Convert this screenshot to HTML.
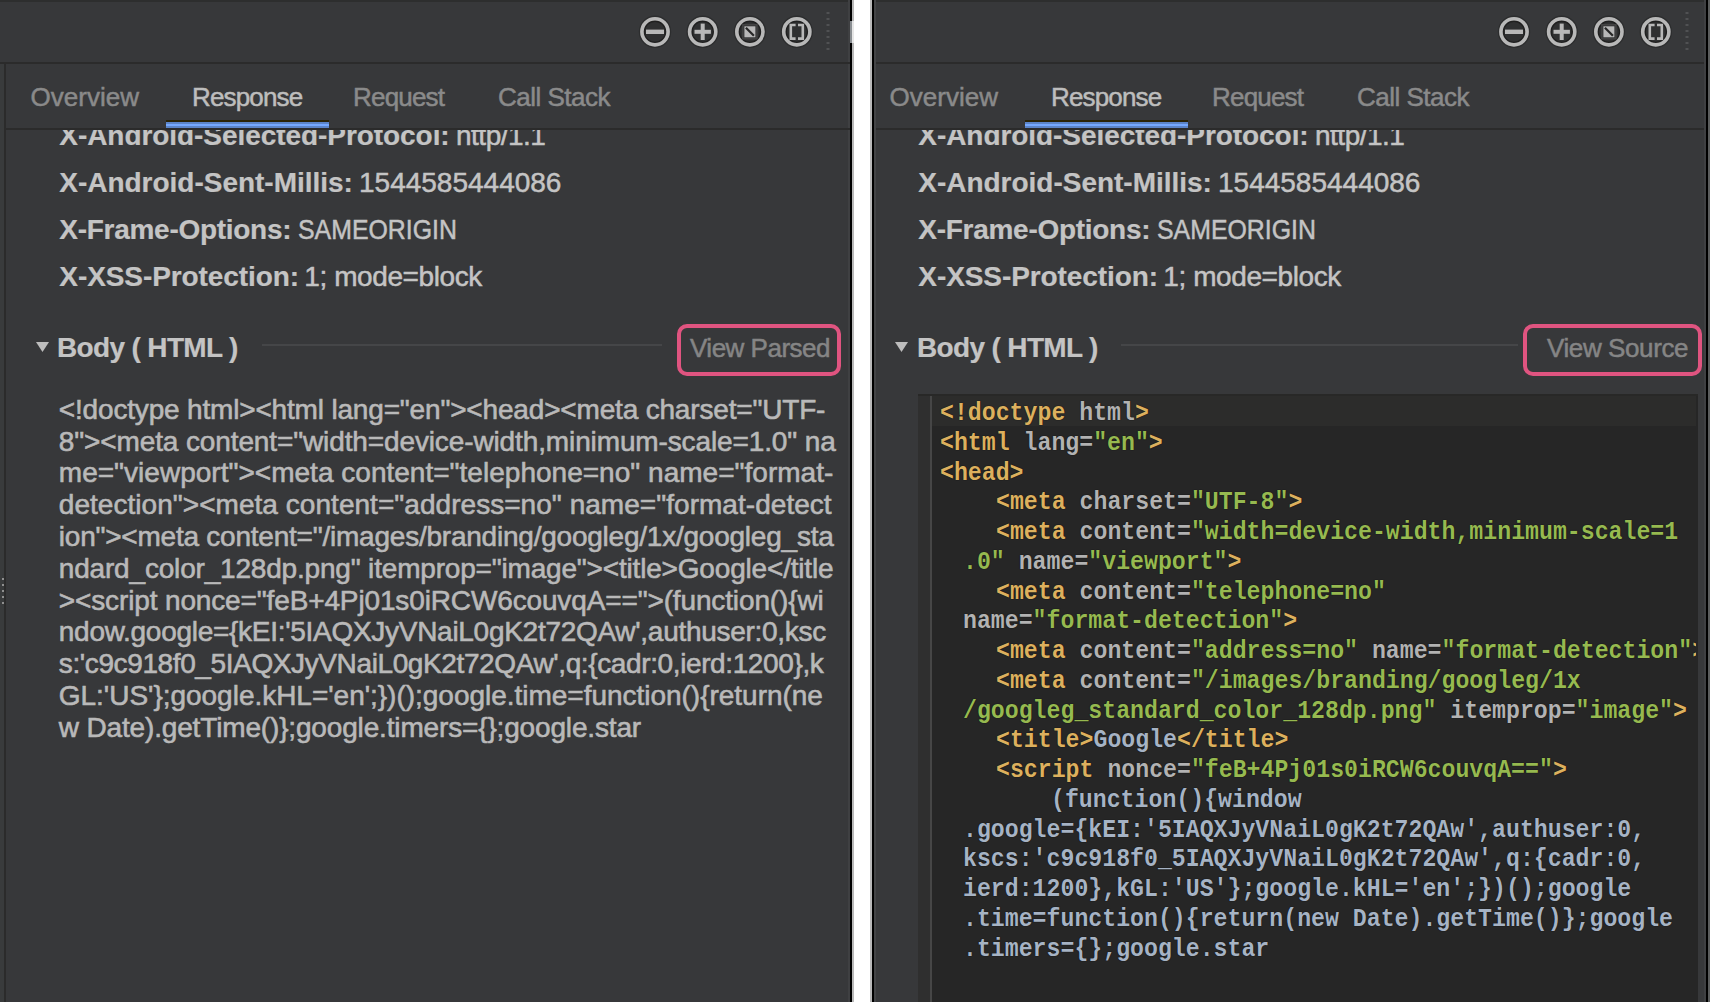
<!DOCTYPE html><html><head><meta charset="utf-8"><style>html,body{margin:0;padding:0;}body{width:1712px;height:1002px;overflow:hidden;position:relative;background:#37383a;font-family:'Liberation Sans', sans-serif;}div{box-sizing:border-box}</style></head><body>
<div style="position:absolute;left:0px;top:0px;width:1712px;height:2px;background:#2d2e2e;"></div>
<div style="position:absolute;left:848px;top:0px;width:2px;height:1002px;background:#3f4042;"></div>
<div style="position:absolute;left:0px;top:62px;width:850px;height:2px;background:#2b2b2b;"></div>
<div style="position:absolute;left:874px;top:62px;width:832px;height:2px;background:#2b2b2b;"></div>
<div style="position:absolute;left:0px;top:128px;width:850px;height:2px;background:#2b2b2b;"></div>
<div style="position:absolute;left:874px;top:128px;width:832px;height:2px;background:#2b2b2b;"></div>
<div style="position:absolute;left:0px;top:64px;width:4px;height:938px;background:#393b3c;"></div>
<div style="position:absolute;left:4px;top:64px;width:2px;height:938px;background:#2b2b2b;"></div>
<div style="position:absolute;left:2px;top:578px;width:2px;height:2px;background:#8f8f8f;"></div>
<div style="position:absolute;left:2px;top:584px;width:2px;height:2px;background:#8f8f8f;"></div>
<div style="position:absolute;left:2px;top:590px;width:2px;height:2px;background:#8f8f8f;"></div>
<div style="position:absolute;left:2px;top:596px;width:2px;height:2px;background:#8f8f8f;"></div>
<div style="position:absolute;left:2px;top:602px;width:2px;height:2px;background:#8f8f8f;"></div>
<div style="position:absolute;left:850px;top:0px;width:2px;height:1002px;background:#000;"></div>
<div style="position:absolute;left:850px;top:21px;width:2px;height:22px;background:#8a8e92;"></div>
<div style="position:absolute;left:852px;top:0px;width:2px;height:1002px;background:#b9b9b9;"></div>
<div style="position:absolute;left:852px;top:21px;width:2px;height:22px;background:#e6e6e6;"></div>
<div style="position:absolute;left:854px;top:0px;width:16px;height:1002px;background:#ffffff;"></div>
<div style="position:absolute;left:870px;top:0px;width:2px;height:1002px;background:#b9b9b9;"></div>
<div style="position:absolute;left:872px;top:0px;width:2px;height:1002px;background:#000;"></div>
<div style="position:absolute;left:874px;top:0px;width:2px;height:1002px;background:#434446;"></div>
<div style="position:absolute;left:1704px;top:0px;width:2px;height:1002px;background:#3f4042;"></div>
<div style="position:absolute;left:1706px;top:0px;width:2px;height:1002px;background:#000;"></div>
<div style="position:absolute;left:1708px;top:0px;width:2px;height:1002px;background:#5a5c5c;"></div>
<div style="position:absolute;left:1710px;top:0px;width:2px;height:1002px;background:#ffffff;"></div>
<svg style="position:absolute;left:0;top:0" width="1712" height="70"><circle cx="655" cy="31.8" r="15.4" fill="none" stroke="#2c2d2e" stroke-width="1.6"/><circle cx="655" cy="31.8" r="11.2" fill="#2f3031"/><circle cx="655" cy="31.8" r="10.6" fill="none" stroke="#202020" stroke-width="1.4"/><circle cx="655" cy="31.8" r="13.1" fill="none" stroke="#b8b8b8" stroke-width="3.6"/><rect x="646" y="29.6" width="18" height="4.4" fill="#b8b8b8"/><circle cx="702.7" cy="31.8" r="15.4" fill="none" stroke="#2c2d2e" stroke-width="1.6"/><circle cx="702.7" cy="31.8" r="11.2" fill="#2f3031"/><circle cx="702.7" cy="31.8" r="10.6" fill="none" stroke="#202020" stroke-width="1.4"/><circle cx="702.7" cy="31.8" r="13.1" fill="none" stroke="#b8b8b8" stroke-width="3.6"/><rect x="694.5" y="29.8" width="16.4" height="4" fill="#b8b8b8"/><rect x="700.7" y="23.6" width="4" height="16.4" fill="#b8b8b8"/><circle cx="749.9" cy="31.8" r="15.4" fill="none" stroke="#2c2d2e" stroke-width="1.6"/><circle cx="749.9" cy="31.8" r="11.2" fill="#2f3031"/><circle cx="749.9" cy="31.8" r="10.6" fill="none" stroke="#202020" stroke-width="1.4"/><circle cx="749.9" cy="31.8" r="13.1" fill="none" stroke="#b8b8b8" stroke-width="3.6"/><rect x="742.9" y="24.8" width="14" height="14" fill="none" stroke="#444" stroke-width="1.5"/><rect x="744.4" y="26.3" width="11" height="11" fill="#b8b8b8"/><line x1="745.9" y1="27.8" x2="753.9" y2="35.8" stroke="#262626" stroke-width="2.2"/><circle cx="796.8" cy="31.8" r="15.4" fill="none" stroke="#2c2d2e" stroke-width="1.6"/><circle cx="796.8" cy="31.8" r="11.2" fill="#2f3031"/><circle cx="796.8" cy="31.8" r="10.6" fill="none" stroke="#202020" stroke-width="1.4"/><circle cx="796.8" cy="31.8" r="13.1" fill="none" stroke="#b8b8b8" stroke-width="3.6"/><path d="M795.5999999999999 25.0 h-4.8 v13.6 h4.8" fill="none" stroke="#b8b8b8" stroke-width="2.6"/><path d="M798.0 25.0 h4.8 v13.6 h-4.8" fill="none" stroke="#b8b8b8" stroke-width="2.6"/><rect x="826.5" y="12" width="3" height="2" fill="#505153"/><rect x="826.5" y="18" width="3" height="2" fill="#505153"/><rect x="826.5" y="24" width="3" height="2" fill="#505153"/><rect x="826.5" y="30" width="3" height="2" fill="#505153"/><rect x="826.5" y="36" width="3" height="2" fill="#505153"/><rect x="826.5" y="42" width="3" height="2" fill="#505153"/><rect x="826.5" y="48" width="3" height="2" fill="#505153"/></svg>
<div style="position:absolute;left:30.6px;top:79.79px;height:34px;line-height:34px;font-size:26px;font-weight:normal;color:#8a8a8a;letter-spacing:0px;white-space:pre;font-family:'Liberation Sans', sans-serif;-webkit-text-stroke:0.5px currentColor">Overview</div>
<div style="position:absolute;left:192px;top:79.79px;height:34px;line-height:34px;font-size:26px;font-weight:normal;color:#bdbdbd;letter-spacing:-0.85px;white-space:pre;font-family:'Liberation Sans', sans-serif;-webkit-text-stroke:0.5px currentColor">Response</div>
<div style="position:absolute;left:353px;top:79.79px;height:34px;line-height:34px;font-size:26px;font-weight:normal;color:#8a8a8a;letter-spacing:-0.8px;white-space:pre;font-family:'Liberation Sans', sans-serif;-webkit-text-stroke:0.5px currentColor">Request</div>
<div style="position:absolute;left:498px;top:79.79px;height:34px;line-height:34px;font-size:26px;font-weight:normal;color:#8a8a8a;letter-spacing:-0.5px;white-space:pre;font-family:'Liberation Sans', sans-serif;-webkit-text-stroke:0.5px currentColor">Call Stack</div>
<div style="position:absolute;left:166px;top:120px;width:163px;height:2px;background:#2a2308;"></div>
<div style="position:absolute;left:166px;top:122px;width:163px;height:6px;background:#6a9cf0;background:linear-gradient(#5b84c8 0,#5b84c8 2px,#75a8ff 2px,#75a8ff 4px,#5b84c8 4px)"></div>
<div style="position:absolute;left:0px;top:130px;width:850px;height:200px;overflow:hidden">
<div style="position:absolute;left:59.3px;top:-12.31px;height:36px;line-height:36px;font-size:28px;font-weight:bold;letter-spacing:-0.06px;color:#c4c4c4;white-space:pre;font-family:'Liberation Sans', sans-serif;-webkit-text-stroke:0.2px #c4c4c4">X-Android-Selected-Protocol:</div>
<div style="position:absolute;left:456.0px;top:-12.31px;height:36px;line-height:36px;font-size:28px;letter-spacing:-0.5px;color:#c4c4c4;white-space:pre;font-family:'Liberation Sans', sans-serif;-webkit-text-stroke:0.5px #c4c4c4;">http/1.1</div>
<div style="position:absolute;left:59.3px;top:34.89px;height:36px;line-height:36px;font-size:28px;font-weight:bold;letter-spacing:-0.02px;color:#c4c4c4;white-space:pre;font-family:'Liberation Sans', sans-serif;-webkit-text-stroke:0.2px #c4c4c4">X-Android-Sent-Millis:</div>
<div style="position:absolute;left:359.0px;top:34.89px;height:36px;line-height:36px;font-size:28px;letter-spacing:0.0px;color:#c4c4c4;white-space:pre;font-family:'Liberation Sans', sans-serif;-webkit-text-stroke:0.5px #c4c4c4;">1544585444086</div>
<div style="position:absolute;left:59.3px;top:82.09px;height:36px;line-height:36px;font-size:28px;font-weight:bold;letter-spacing:-0.28px;color:#c4c4c4;white-space:pre;font-family:'Liberation Sans', sans-serif;-webkit-text-stroke:0.2px #c4c4c4">X-Frame-Options:</div>
<div style="position:absolute;left:298.0px;top:82.09px;height:36px;line-height:36px;font-size:28px;letter-spacing:0px;color:#c4c4c4;white-space:pre;font-family:'Liberation Sans', sans-serif;-webkit-text-stroke:0.5px #c4c4c4;transform:scaleX(0.888);transform-origin:0 0;">SAMEORIGIN</div>
<div style="position:absolute;left:59.3px;top:129.29px;height:36px;line-height:36px;font-size:28px;font-weight:bold;letter-spacing:-0.08px;color:#c4c4c4;white-space:pre;font-family:'Liberation Sans', sans-serif;-webkit-text-stroke:0.2px #c4c4c4">X-XSS-Protection:</div>
<div style="position:absolute;left:304.3px;top:129.29px;height:36px;line-height:36px;font-size:28px;letter-spacing:-0.41px;color:#c4c4c4;white-space:pre;font-family:'Liberation Sans', sans-serif;-webkit-text-stroke:0.5px #c4c4c4;">1; mode=block</div>
</div>
<svg style="position:absolute;left:0px;top:330px" width="60" height="40"><path d="M36 12 L49 12 L42.5 22 Z" fill="#bdbdbd"/></svg>
<div style="position:absolute;left:57px;top:329.69px;height:36px;line-height:36px;font-size:28px;font-weight:bold;color:#c4c4c4;letter-spacing:-0.65px;white-space:pre;font-family:'Liberation Sans', sans-serif;-webkit-text-stroke:0.2px #c4c4c4">Body ( HTML )</div>
<div style="position:absolute;left:262px;top:344px;width:400px;height:2px;background:#454648;"></div>
<div style="position:absolute;left:677px;top:324px;width:164px;height:52px;border:4px solid #e05480;border-radius:10px"></div>
<div style="position:absolute;left:690px;top:331.19px;height:34px;line-height:34px;font-size:26px;font-weight:normal;color:#858585;letter-spacing:-0.5px;white-space:pre;font-family:'Liberation Sans', sans-serif;-webkit-text-stroke:0.5px currentColor">View Parsed</div>
<svg style="position:absolute;left:0;top:0" width="1712" height="70"><circle cx="1514" cy="31.8" r="15.4" fill="none" stroke="#2c2d2e" stroke-width="1.6"/><circle cx="1514" cy="31.8" r="11.2" fill="#2f3031"/><circle cx="1514" cy="31.8" r="10.6" fill="none" stroke="#202020" stroke-width="1.4"/><circle cx="1514" cy="31.8" r="13.1" fill="none" stroke="#b8b8b8" stroke-width="3.6"/><rect x="1505" y="29.6" width="18" height="4.4" fill="#b8b8b8"/><circle cx="1561.7" cy="31.8" r="15.4" fill="none" stroke="#2c2d2e" stroke-width="1.6"/><circle cx="1561.7" cy="31.8" r="11.2" fill="#2f3031"/><circle cx="1561.7" cy="31.8" r="10.6" fill="none" stroke="#202020" stroke-width="1.4"/><circle cx="1561.7" cy="31.8" r="13.1" fill="none" stroke="#b8b8b8" stroke-width="3.6"/><rect x="1553.5" y="29.8" width="16.4" height="4" fill="#b8b8b8"/><rect x="1559.7" y="23.6" width="4" height="16.4" fill="#b8b8b8"/><circle cx="1608.9" cy="31.8" r="15.4" fill="none" stroke="#2c2d2e" stroke-width="1.6"/><circle cx="1608.9" cy="31.8" r="11.2" fill="#2f3031"/><circle cx="1608.9" cy="31.8" r="10.6" fill="none" stroke="#202020" stroke-width="1.4"/><circle cx="1608.9" cy="31.8" r="13.1" fill="none" stroke="#b8b8b8" stroke-width="3.6"/><rect x="1601.9" y="24.8" width="14" height="14" fill="none" stroke="#444" stroke-width="1.5"/><rect x="1603.4" y="26.3" width="11" height="11" fill="#b8b8b8"/><line x1="1604.9" y1="27.8" x2="1612.9" y2="35.8" stroke="#262626" stroke-width="2.2"/><circle cx="1655.8" cy="31.8" r="15.4" fill="none" stroke="#2c2d2e" stroke-width="1.6"/><circle cx="1655.8" cy="31.8" r="11.2" fill="#2f3031"/><circle cx="1655.8" cy="31.8" r="10.6" fill="none" stroke="#202020" stroke-width="1.4"/><circle cx="1655.8" cy="31.8" r="13.1" fill="none" stroke="#b8b8b8" stroke-width="3.6"/><path d="M1654.6 25.0 h-4.8 v13.6 h4.8" fill="none" stroke="#b8b8b8" stroke-width="2.6"/><path d="M1657.0 25.0 h4.8 v13.6 h-4.8" fill="none" stroke="#b8b8b8" stroke-width="2.6"/><rect x="1685.5" y="12" width="3" height="2" fill="#505153"/><rect x="1685.5" y="18" width="3" height="2" fill="#505153"/><rect x="1685.5" y="24" width="3" height="2" fill="#505153"/><rect x="1685.5" y="30" width="3" height="2" fill="#505153"/><rect x="1685.5" y="36" width="3" height="2" fill="#505153"/><rect x="1685.5" y="42" width="3" height="2" fill="#505153"/><rect x="1685.5" y="48" width="3" height="2" fill="#505153"/></svg>
<div style="position:absolute;left:889.6px;top:79.79px;height:34px;line-height:34px;font-size:26px;font-weight:normal;color:#8a8a8a;letter-spacing:0px;white-space:pre;font-family:'Liberation Sans', sans-serif;-webkit-text-stroke:0.5px currentColor">Overview</div>
<div style="position:absolute;left:1051px;top:79.79px;height:34px;line-height:34px;font-size:26px;font-weight:normal;color:#bdbdbd;letter-spacing:-0.85px;white-space:pre;font-family:'Liberation Sans', sans-serif;-webkit-text-stroke:0.5px currentColor">Response</div>
<div style="position:absolute;left:1212px;top:79.79px;height:34px;line-height:34px;font-size:26px;font-weight:normal;color:#8a8a8a;letter-spacing:-0.8px;white-space:pre;font-family:'Liberation Sans', sans-serif;-webkit-text-stroke:0.5px currentColor">Request</div>
<div style="position:absolute;left:1357px;top:79.79px;height:34px;line-height:34px;font-size:26px;font-weight:normal;color:#8a8a8a;letter-spacing:-0.5px;white-space:pre;font-family:'Liberation Sans', sans-serif;-webkit-text-stroke:0.5px currentColor">Call Stack</div>
<div style="position:absolute;left:1025px;top:120px;width:163px;height:2px;background:#2a2308;"></div>
<div style="position:absolute;left:1025px;top:122px;width:163px;height:6px;background:#6a9cf0;background:linear-gradient(#5b84c8 0,#5b84c8 2px,#75a8ff 2px,#75a8ff 4px,#5b84c8 4px)"></div>
<div style="position:absolute;left:859px;top:130px;width:850px;height:200px;overflow:hidden">
<div style="position:absolute;left:59.3px;top:-12.31px;height:36px;line-height:36px;font-size:28px;font-weight:bold;letter-spacing:-0.06px;color:#c4c4c4;white-space:pre;font-family:'Liberation Sans', sans-serif;-webkit-text-stroke:0.2px #c4c4c4">X-Android-Selected-Protocol:</div>
<div style="position:absolute;left:456.0px;top:-12.31px;height:36px;line-height:36px;font-size:28px;letter-spacing:-0.5px;color:#c4c4c4;white-space:pre;font-family:'Liberation Sans', sans-serif;-webkit-text-stroke:0.5px #c4c4c4;">http/1.1</div>
<div style="position:absolute;left:59.3px;top:34.89px;height:36px;line-height:36px;font-size:28px;font-weight:bold;letter-spacing:-0.02px;color:#c4c4c4;white-space:pre;font-family:'Liberation Sans', sans-serif;-webkit-text-stroke:0.2px #c4c4c4">X-Android-Sent-Millis:</div>
<div style="position:absolute;left:359.0px;top:34.89px;height:36px;line-height:36px;font-size:28px;letter-spacing:0.0px;color:#c4c4c4;white-space:pre;font-family:'Liberation Sans', sans-serif;-webkit-text-stroke:0.5px #c4c4c4;">1544585444086</div>
<div style="position:absolute;left:59.3px;top:82.09px;height:36px;line-height:36px;font-size:28px;font-weight:bold;letter-spacing:-0.28px;color:#c4c4c4;white-space:pre;font-family:'Liberation Sans', sans-serif;-webkit-text-stroke:0.2px #c4c4c4">X-Frame-Options:</div>
<div style="position:absolute;left:298.0px;top:82.09px;height:36px;line-height:36px;font-size:28px;letter-spacing:0px;color:#c4c4c4;white-space:pre;font-family:'Liberation Sans', sans-serif;-webkit-text-stroke:0.5px #c4c4c4;transform:scaleX(0.888);transform-origin:0 0;">SAMEORIGIN</div>
<div style="position:absolute;left:59.3px;top:129.29px;height:36px;line-height:36px;font-size:28px;font-weight:bold;letter-spacing:-0.08px;color:#c4c4c4;white-space:pre;font-family:'Liberation Sans', sans-serif;-webkit-text-stroke:0.2px #c4c4c4">X-XSS-Protection:</div>
<div style="position:absolute;left:304.3px;top:129.29px;height:36px;line-height:36px;font-size:28px;letter-spacing:-0.41px;color:#c4c4c4;white-space:pre;font-family:'Liberation Sans', sans-serif;-webkit-text-stroke:0.5px #c4c4c4;">1; mode=block</div>
</div>
<svg style="position:absolute;left:859px;top:330px" width="60" height="40"><path d="M36 12 L49 12 L42.5 22 Z" fill="#bdbdbd"/></svg>
<div style="position:absolute;left:917px;top:329.69px;height:36px;line-height:36px;font-size:28px;font-weight:bold;color:#c4c4c4;letter-spacing:-0.65px;white-space:pre;font-family:'Liberation Sans', sans-serif;-webkit-text-stroke:0.2px #c4c4c4">Body ( HTML )</div>
<div style="position:absolute;left:1121px;top:344px;width:397px;height:2px;background:#454648;"></div>
<div style="position:absolute;left:1523px;top:324px;width:179px;height:52px;border:4px solid #e05480;border-radius:10px"></div>
<div style="position:absolute;left:1547px;top:331.19px;height:34px;line-height:34px;font-size:26px;font-weight:normal;color:#858585;letter-spacing:-0.4px;white-space:pre;font-family:'Liberation Sans', sans-serif;-webkit-text-stroke:0.5px currentColor">View Source</div>
<div style="position:absolute;left:58.8px;top:391.89px;height:36px;line-height:36px;font-size:28px;font-weight:normal;color:#b9b9b9;letter-spacing:-0.173px;white-space:pre;font-family:'Liberation Sans', sans-serif;-webkit-text-stroke:0.6px #b9b9b9">&lt;!doctype html&gt;&lt;html lang="en"&gt;&lt;head&gt;&lt;meta charset="UTF-</div>
<div style="position:absolute;left:58.8px;top:423.69px;height:36px;line-height:36px;font-size:28px;font-weight:normal;color:#b9b9b9;letter-spacing:-0.121px;white-space:pre;font-family:'Liberation Sans', sans-serif;-webkit-text-stroke:0.6px #b9b9b9">8"&gt;&lt;meta content="width=device-width,minimum-scale=1.0" na</div>
<div style="position:absolute;left:58.8px;top:455.49px;height:36px;line-height:36px;font-size:28px;font-weight:normal;color:#b9b9b9;letter-spacing:0.018px;white-space:pre;font-family:'Liberation Sans', sans-serif;-webkit-text-stroke:0.6px #b9b9b9">me="viewport"&gt;&lt;meta content="telephone=no" name="format-</div>
<div style="position:absolute;left:58.8px;top:487.29px;height:36px;line-height:36px;font-size:28px;font-weight:normal;color:#b9b9b9;letter-spacing:0.041px;white-space:pre;font-family:'Liberation Sans', sans-serif;-webkit-text-stroke:0.6px #b9b9b9">detection"&gt;&lt;meta content="address=no" name="format-detect</div>
<div style="position:absolute;left:58.8px;top:519.09px;height:36px;line-height:36px;font-size:28px;font-weight:normal;color:#b9b9b9;letter-spacing:-0.226px;white-space:pre;font-family:'Liberation Sans', sans-serif;-webkit-text-stroke:0.6px #b9b9b9">ion"&gt;&lt;meta content="/images/branding/googleg/1x/googleg_sta</div>
<div style="position:absolute;left:58.8px;top:550.89px;height:36px;line-height:36px;font-size:28px;font-weight:normal;color:#b9b9b9;letter-spacing:-0.183px;white-space:pre;font-family:'Liberation Sans', sans-serif;-webkit-text-stroke:0.6px #b9b9b9">ndard_color_128dp.png" itemprop="image"&gt;&lt;title&gt;Google&lt;/title</div>
<div style="position:absolute;left:58.8px;top:582.69px;height:36px;line-height:36px;font-size:28px;font-weight:normal;color:#b9b9b9;letter-spacing:-0.136px;white-space:pre;font-family:'Liberation Sans', sans-serif;-webkit-text-stroke:0.6px #b9b9b9">&gt;&lt;script nonce="feB+4Pj01s0iRCW6couvqA=="&gt;(function(){wi</div>
<div style="position:absolute;left:58.8px;top:614.49px;height:36px;line-height:36px;font-size:28px;font-weight:normal;color:#b9b9b9;letter-spacing:-0.282px;white-space:pre;font-family:'Liberation Sans', sans-serif;-webkit-text-stroke:0.6px #b9b9b9">ndow.google={kEI:'5IAQXJyVNaiL0gK2t72QAw',authuser:0,ksc</div>
<div style="position:absolute;left:58.8px;top:646.29px;height:36px;line-height:36px;font-size:28px;font-weight:normal;color:#b9b9b9;letter-spacing:-0.384px;white-space:pre;font-family:'Liberation Sans', sans-serif;-webkit-text-stroke:0.6px #b9b9b9">s:'c9c918f0_5IAQXJyVNaiL0gK2t72QAw',q:{cadr:0,ierd:1200},k</div>
<div style="position:absolute;left:58.8px;top:678.09px;height:36px;line-height:36px;font-size:28px;font-weight:normal;color:#b9b9b9;letter-spacing:-0.02px;white-space:pre;font-family:'Liberation Sans', sans-serif;-webkit-text-stroke:0.6px #b9b9b9">GL:'US'};google.kHL='en';})();google.time=function(){return(ne</div>
<div style="position:absolute;left:58.8px;top:709.89px;height:36px;line-height:36px;font-size:28px;font-weight:normal;color:#b9b9b9;letter-spacing:-0.157px;white-space:pre;font-family:'Liberation Sans', sans-serif;-webkit-text-stroke:0.6px #b9b9b9">w Date).getTime()};google.timers={};google.star</div>
<div style="position:absolute;left:918px;top:394px;width:780px;height:608px;background:#262626;"></div>
<div style="position:absolute;left:918px;top:394px;width:12px;height:608px;background:#2f2f2f;"></div>
<div style="position:absolute;left:930px;top:396px;width:2px;height:606px;background:#464646;"></div>
<div style="position:absolute;left:932px;top:394px;width:764px;height:32px;background:#2c2c2b;"></div>
<div style="position:absolute;left:918px;top:394px;width:780px;height:2px;background:#282827;"></div>
<div style="position:absolute;left:932px;top:394px;width:764px;height:608px;overflow:hidden">
<div style="position:absolute;left:8.00px;top:4.18px;height:30px;line-height:30px;font-size:26px;white-space:pre;font-family:'Liberation Mono', monospace;transform:scaleX(0.8923);transform-origin:0 0;font-weight:bold;text-shadow:0 0 1.2px #000"><span style="color:#dcb05e">&lt;!doctype</span><span style="color:#b2b2b2"> html</span><span style="color:#dcb05e">&gt;</span></div>
<div style="position:absolute;left:8.00px;top:33.92px;height:30px;line-height:30px;font-size:26px;white-space:pre;font-family:'Liberation Mono', monospace;transform:scaleX(0.8923);transform-origin:0 0;font-weight:bold;text-shadow:0 0 1.2px #000"><span style="color:#dcb05e">&lt;html</span><span style="color:#b2b2b2"> lang=</span><span style="color:#96b950">"en"</span><span style="color:#dcb05e">&gt;</span></div>
<div style="position:absolute;left:8.00px;top:63.66px;height:30px;line-height:30px;font-size:26px;white-space:pre;font-family:'Liberation Mono', monospace;transform:scaleX(0.8923);transform-origin:0 0;font-weight:bold;text-shadow:0 0 1.2px #000"><span style="color:#dcb05e">&lt;head&gt;</span></div>
<div style="position:absolute;left:63.68px;top:93.40px;height:30px;line-height:30px;font-size:26px;white-space:pre;font-family:'Liberation Mono', monospace;transform:scaleX(0.8923);transform-origin:0 0;font-weight:bold;text-shadow:0 0 1.2px #000"><span style="color:#dcb05e">&lt;meta</span><span style="color:#b2b2b2"> charset=</span><span style="color:#96b950">"UTF-8"</span><span style="color:#dcb05e">&gt;</span></div>
<div style="position:absolute;left:63.68px;top:123.14px;height:30px;line-height:30px;font-size:26px;white-space:pre;font-family:'Liberation Mono', monospace;transform:scaleX(0.8923);transform-origin:0 0;font-weight:bold;text-shadow:0 0 1.2px #000"><span style="color:#dcb05e">&lt;meta</span><span style="color:#b2b2b2"> content=</span><span style="color:#96b950">"width=device-width,minimum-scale=1</span></div>
<div style="position:absolute;left:30.50px;top:152.88px;height:30px;line-height:30px;font-size:26px;white-space:pre;font-family:'Liberation Mono', monospace;transform:scaleX(0.8923);transform-origin:0 0;font-weight:bold;text-shadow:0 0 1.2px #000"><span style="color:#96b950">.0"</span><span style="color:#b2b2b2"> name=</span><span style="color:#96b950">"viewport"</span><span style="color:#dcb05e">&gt;</span></div>
<div style="position:absolute;left:63.68px;top:182.62px;height:30px;line-height:30px;font-size:26px;white-space:pre;font-family:'Liberation Mono', monospace;transform:scaleX(0.8923);transform-origin:0 0;font-weight:bold;text-shadow:0 0 1.2px #000"><span style="color:#dcb05e">&lt;meta</span><span style="color:#b2b2b2"> content=</span><span style="color:#96b950">"telephone=no"</span></div>
<div style="position:absolute;left:30.50px;top:212.36px;height:30px;line-height:30px;font-size:26px;white-space:pre;font-family:'Liberation Mono', monospace;transform:scaleX(0.8923);transform-origin:0 0;font-weight:bold;text-shadow:0 0 1.2px #000"><span style="color:#b2b2b2">name=</span><span style="color:#96b950">"format-detection"</span><span style="color:#dcb05e">&gt;</span></div>
<div style="position:absolute;left:63.68px;top:242.10px;height:30px;line-height:30px;font-size:26px;white-space:pre;font-family:'Liberation Mono', monospace;transform:scaleX(0.8923);transform-origin:0 0;font-weight:bold;text-shadow:0 0 1.2px #000"><span style="color:#dcb05e">&lt;meta</span><span style="color:#b2b2b2"> content=</span><span style="color:#96b950">"address=no"</span><span style="color:#b2b2b2"> name=</span><span style="color:#96b950">"format-detection"</span><span style="color:#dcb05e">&gt;</span></div>
<div style="position:absolute;left:63.68px;top:271.84px;height:30px;line-height:30px;font-size:26px;white-space:pre;font-family:'Liberation Mono', monospace;transform:scaleX(0.8923);transform-origin:0 0;font-weight:bold;text-shadow:0 0 1.2px #000"><span style="color:#dcb05e">&lt;meta</span><span style="color:#b2b2b2"> content=</span><span style="color:#96b950">"/images/branding/googleg/1x</span></div>
<div style="position:absolute;left:30.50px;top:301.58px;height:30px;line-height:30px;font-size:26px;white-space:pre;font-family:'Liberation Mono', monospace;transform:scaleX(0.8923);transform-origin:0 0;font-weight:bold;text-shadow:0 0 1.2px #000"><span style="color:#96b950">/googleg_standard_color_128dp.png"</span><span style="color:#b2b2b2"> itemprop=</span><span style="color:#96b950">"image"</span><span style="color:#dcb05e">&gt;</span></div>
<div style="position:absolute;left:63.68px;top:331.32px;height:30px;line-height:30px;font-size:26px;white-space:pre;font-family:'Liberation Mono', monospace;transform:scaleX(0.8923);transform-origin:0 0;font-weight:bold;text-shadow:0 0 1.2px #000"><span style="color:#dcb05e">&lt;title&gt;</span><span style="color:#a6b3c4">Google</span><span style="color:#dcb05e">&lt;/title&gt;</span></div>
<div style="position:absolute;left:63.68px;top:361.06px;height:30px;line-height:30px;font-size:26px;white-space:pre;font-family:'Liberation Mono', monospace;transform:scaleX(0.8923);transform-origin:0 0;font-weight:bold;text-shadow:0 0 1.2px #000"><span style="color:#dcb05e">&lt;script</span><span style="color:#b2b2b2"> nonce=</span><span style="color:#96b950">"feB+4Pj01s0iRCW6couvqA=="</span><span style="color:#dcb05e">&gt;</span></div>
<div style="position:absolute;left:119.36px;top:390.80px;height:30px;line-height:30px;font-size:26px;white-space:pre;font-family:'Liberation Mono', monospace;transform:scaleX(0.8923);transform-origin:0 0;font-weight:bold;text-shadow:0 0 1.2px #000"><span style="color:#a6b3c4">(function(){window</span></div>
<div style="position:absolute;left:30.50px;top:420.54px;height:30px;line-height:30px;font-size:26px;white-space:pre;font-family:'Liberation Mono', monospace;transform:scaleX(0.8923);transform-origin:0 0;font-weight:bold;text-shadow:0 0 1.2px #000"><span style="color:#a6b3c4">.google={kEI:'5IAQXJyVNaiL0gK2t72QAw',authuser:0,</span></div>
<div style="position:absolute;left:30.50px;top:450.28px;height:30px;line-height:30px;font-size:26px;white-space:pre;font-family:'Liberation Mono', monospace;transform:scaleX(0.8923);transform-origin:0 0;font-weight:bold;text-shadow:0 0 1.2px #000"><span style="color:#a6b3c4">kscs:'c9c918f0_5IAQXJyVNaiL0gK2t72QAw',q:{cadr:0,</span></div>
<div style="position:absolute;left:30.50px;top:480.02px;height:30px;line-height:30px;font-size:26px;white-space:pre;font-family:'Liberation Mono', monospace;transform:scaleX(0.8923);transform-origin:0 0;font-weight:bold;text-shadow:0 0 1.2px #000"><span style="color:#a6b3c4">ierd:1200},kGL:'US'};google.kHL='en';})();google</span></div>
<div style="position:absolute;left:30.50px;top:509.76px;height:30px;line-height:30px;font-size:26px;white-space:pre;font-family:'Liberation Mono', monospace;transform:scaleX(0.8923);transform-origin:0 0;font-weight:bold;text-shadow:0 0 1.2px #000"><span style="color:#a6b3c4">.time=function(){return(new Date).getTime()};google</span></div>
<div style="position:absolute;left:30.50px;top:539.50px;height:30px;line-height:30px;font-size:26px;white-space:pre;font-family:'Liberation Mono', monospace;transform:scaleX(0.8923);transform-origin:0 0;font-weight:bold;text-shadow:0 0 1.2px #000"><span style="color:#a6b3c4">.timers={};google.star</span></div>
</div>
</body></html>
